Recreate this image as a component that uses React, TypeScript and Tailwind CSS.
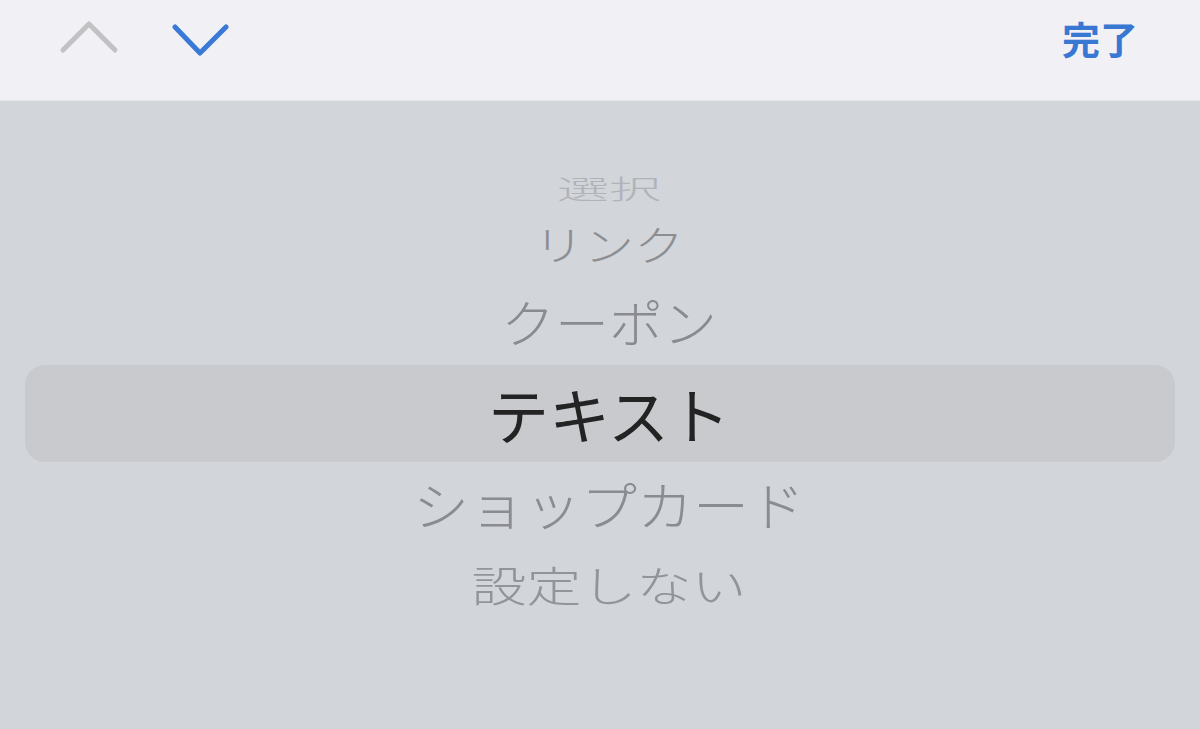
import React from "react";

type Row = {
  label: string;
  h: string;
  size: string;
  scale: string;
  color: string;
};

// wheel rows above / below the selected one, squashed like the iOS picker drum
const above: Row[] = [
  { label: "選択", h: "h-[42px]", size: "text-[52px]", scale: "scale-y-[0.5]", color: "text-[#b1b3b7]" },
  { label: "リンク", h: "h-[68px]", size: "text-[50px]", scale: "scale-y-[0.82]", color: "text-[#8d8e92]" },
  { label: "クーポン", h: "h-[88px]", size: "text-[54px]", scale: "scale-y-[0.95]", color: "text-[#8a8b8f]" },
];

const below: Row[] = [
  { label: "ショップカード", h: "h-[82px]", size: "text-[56px]", scale: "scale-y-[0.94]", color: "text-[#8b8c90]" },
  { label: "設定しない", h: "h-[78px]", size: "text-[55px]", scale: "scale-y-[0.77]", color: "text-[#939498]" },
];

function WheelRow({ row }: { row: Row }) {
  return (
    <div className={`flex items-center justify-center ${row.h}`}>
      <span className={`ml-[18px] font-light leading-none ${row.size} ${row.scale} ${row.color}`}>{row.label}</span>
    </div>
  );
}

function Toolbar() {
  return (
    <div className="flex h-[101px] items-start justify-between bg-[#f0f0f5] border-b border-[#e6e7ea]">
      <div className="flex items-start gap-[50px] pl-[58px] pt-[20px]">
        <svg width="62" height="36" viewBox="0 0 62 36" fill="none">
          <polyline
            points="5,30 31,4 57,30"
            stroke="#c2c2c5"
            strokeWidth="5"
            strokeLinecap="round"
            strokeLinejoin="round"
          />
        </svg>
        <svg width="62" height="36" viewBox="0 0 62 36" fill="none">
          <polyline
            points="5,7 30,33 56,7"
            stroke="#3a79d6"
            strokeWidth="5"
            strokeLinecap="round"
            strokeLinejoin="round"
          />
        </svg>
      </div>
      <button className="pr-[62px] pt-[19px] text-[38px] font-bold leading-none text-[#3877d2]">完了</button>
    </div>
  );
}

export default function App() {
  return (
    <div
      className="flex h-[729px] w-[1200px] flex-col overflow-hidden bg-[#d2d5da]"
      style={{ fontFamily: '"Noto Sans CJK JP", "Noto Sans", sans-serif' }}
    >
      <Toolbar />
      <div className="flex flex-col pt-[66px]">
        {above.map((r) => (
          <WheelRow key={r.label} row={r} />
        ))}
        <div className="mx-[25px] flex h-[97px] items-center justify-center rounded-[20px] bg-[#c9cace]">
          <span className="ml-[18px] text-[61px] leading-none text-[#232323]">テキスト</span>
        </div>
        {below.map((r) => (
          <WheelRow key={r.label} row={r} />
        ))}
      </div>
    </div>
  );
}
